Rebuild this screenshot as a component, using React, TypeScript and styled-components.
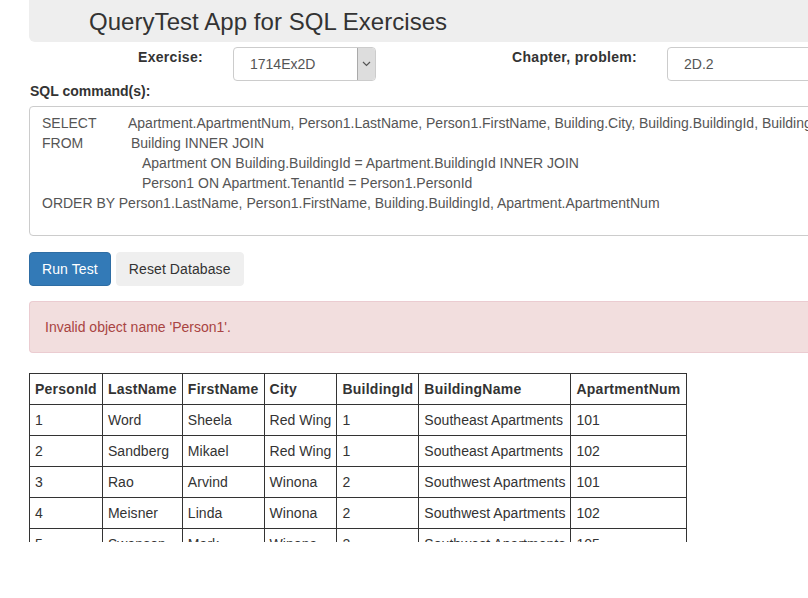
import React from "react";
import styled, { createGlobalStyle } from "styled-components";

const Global = createGlobalStyle`
  html, body { margin: 0; padding: 0; background: #fff; overflow: hidden; }
  body { font-family: "Liberation Sans", Arial, sans-serif; font-size: 14px; line-height: 20px; color: #333; }
`;

const Page = styled.div`
  width: 1100px;
  padding-left: 29px;
  box-sizing: border-box;
`;

const Header = styled.div`
  background: #eee;
  height: 42px;
  border-bottom-left-radius: 6px;
  padding-left: 60px;
  display: flex;
  align-items: center;
`;

const Title = styled.h1`
  margin: 0;
  font-size: 24px;
  font-weight: 400;
  line-height: 26px;
  color: #333;
  padding-top: 2px;
  letter-spacing: 0.05px;
`;

const FormRow = styled.div`
  display: flex;
  align-items: flex-start;
  margin-top: 5px;
  height: 34px;
`;

const Label = styled.label<{ $w: number }>`
  width: ${(p) => p.$w}px;
  text-align: right;
  font-weight: 700;
  letter-spacing: 0.3px;
  padding-right: 30px;
  box-sizing: content-box;
  flex: none;
`;

const SelectBox = styled.div`
  width: 143px;
  height: 34px;
  box-sizing: border-box;
  border: 1px solid #ccc;
  border-radius: 4px;
  display: flex;
  color: #555;
  overflow: hidden;
  flex: none;
`;

const SelectText = styled.div`
  flex: 1;
  padding: 6px 0 0 16px;
  font-size: 14px;
`;

const SelectArrow = styled.div`
  width: 17px;
  background: #ddd;
  border-left: 1px solid #aaa;
  display: flex;
  align-items: center;
  justify-content: center;
`;

const TextInput = styled.div`
  width: 300px;
  height: 34px;
  box-sizing: border-box;
  border: 1px solid #ccc;
  border-radius: 4px;
  padding: 6px 16px;
  color: #555;
`;

const SqlLabel = styled.div`
  font-weight: 700;
  margin: 0 0 5px 1px;
`;

const SqlArea = styled.div`
  height: 130px;
  box-sizing: border-box;
  border: 1px solid #ccc;
  border-radius: 4px;
  padding: 6px 12px;
  color: #555;
  white-space: pre;
  overflow: hidden;
`;

const SqlLine = styled.div<{ $indent?: number }>`
  padding-left: ${(p) => p.$indent || 0}px;
  display: flex;
`;

const Kw = styled.span<{ $w: number }>`
  display: inline-block;
  width: ${(p) => p.$w}px;
`;

const Buttons = styled.div`
  display: flex;
  gap: 5px;
  margin-top: 16px;
`;

const Btn = styled.button<{ $primary?: boolean }>`
  font-family: inherit;
  font-size: 14px;
  line-height: 20px;
  height: 34px;
  padding: 6px 12px;
  border-radius: 4px;
  letter-spacing: 0.1px;
  border: 1px solid ${(p) => (p.$primary ? "#2e6da4" : "#efefef")};
  background: ${(p) => (p.$primary ? "#337ab7" : "#efefef")};
  color: ${(p) => (p.$primary ? "#fff" : "#333")};
`;

const Alert = styled.div`
  margin-top: 15px;
  padding: 15px;
  background: #f2dede;
  border: 1px solid #ebccd1;
  border-right: none;
  border-radius: 4px 0 0 4px;
  color: #a94442;
`;

const TableWrap = styled.div`
  margin-top: 20px;
  height: 169px;
  overflow: hidden;
`;

const Table = styled.table`
  border-collapse: collapse;
  border: 1px solid #333;
`;

const Th = styled.th`
  border: 1px solid #333;
  padding: 5px 5px;
  text-align: left;
  font-weight: 700;
  line-height: 20px;
  letter-spacing: 0.25px;
  white-space: nowrap;
`;

const Td = styled.td`
  border: 1px solid #333;
  padding: 5px 5px;
  line-height: 20px;
  letter-spacing: 0.05px;
  white-space: nowrap;
`;

const cols = ["PersonId", "LastName", "FirstName", "City", "BuildingId", "BuildingName", "ApartmentNum"];
const rows = [
  ["1", "Word", "Sheela", "Red Wing", "1", "Southeast Apartments", "101"],
  ["2", "Sandberg", "Mikael", "Red Wing", "1", "Southeast Apartments", "102"],
  ["3", "Rao", "Arvind", "Winona", "2", "Southwest Apartments", "101"],
  ["4", "Meisner", "Linda", "Winona", "2", "Southwest Apartments", "102"],
  ["5", "Swanson", "Mark", "Winona", "2", "Southwest Apartments", "105"],
  ["6", "Thompson", "Lee", "Winona", "2", "Southwest Apartments", "106"],
];

export default function App() {
  return (
    <Page>
      <Global />
      <Header>
        <Title>QueryTest App for SQL Exercises</Title>
      </Header>
      <FormRow>
        <Label $w={174}>Exercise:</Label>
        <SelectBox>
          <SelectText>1714Ex2D</SelectText>
          <SelectArrow>
            <svg width="9" height="6" viewBox="0 0 9 6">
              <path d="M1 1 L4.5 4.5 L8 1" fill="none" stroke="#555" strokeWidth="1.2" />
            </svg>
          </SelectArrow>
        </SelectBox>
        <Label $w={261}>Chapter, problem:</Label>
        <TextInput>2D.2</TextInput>
      </FormRow>
      <SqlLabel>SQL command(s):</SqlLabel>
      <SqlArea>
        <SqlLine>
          <Kw $w={86}>SELECT</Kw>
          Apartment.ApartmentNum, Person1.LastName, Person1.FirstName, Building.City, Building.BuildingId, Building.BuildingName
        </SqlLine>
        <SqlLine>
          <Kw $w={89}>FROM</Kw>
          Building INNER JOIN
        </SqlLine>
        <SqlLine $indent={100}>Apartment ON Building.BuildingId = Apartment.BuildingId INNER JOIN</SqlLine>
        <SqlLine $indent={100}>Person1 ON Apartment.TenantId = Person1.PersonId</SqlLine>
        <SqlLine>ORDER BY Person1.LastName, Person1.FirstName, Building.BuildingId, Apartment.ApartmentNum</SqlLine>
      </SqlArea>
      <Buttons>
        <Btn $primary>Run Test</Btn>
        <Btn>Reset Database</Btn>
      </Buttons>
      <Alert>Invalid object name 'Person1'.</Alert>
      <TableWrap>
        <Table>
          <thead>
            <tr>
              {cols.map((c) => (
                <Th key={c}>{c}</Th>
              ))}
            </tr>
          </thead>
          <tbody>
            {rows.map((r) => (
              <tr key={r[0]}>
                {r.map((v, i) => (
                  <Td key={i}>{v}</Td>
                ))}
              </tr>
            ))}
          </tbody>
        </Table>
      </TableWrap>
    </Page>
  );
}
